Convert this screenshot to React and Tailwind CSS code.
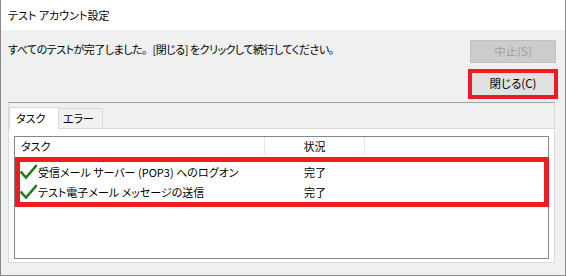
import React from 'react';

const font = { fontFamily: '"Noto Sans CJK JP", "Noto Sans", sans-serif', fontFeatureSettings: '"palt"' };

const Check = () => (
  <svg width="17" height="16" viewBox="0 0 17 16" className="shrink-0">
    <path d="M1.5 8.5 L6 13.5 L16 2" fill="none" stroke="#1d7d1d" strokeWidth="2.6" strokeLinecap="square" />
  </svg>
);

const rows = [
  { task: '受信メール サーバー (POP3) へのログオン', status: '完了' },
  { task: 'テスト電子メール メッセージの送信', status: '完了' },
];

export default function App() {
  return (
    <div className="w-[566px] h-[276px] bg-[#f0f0f0] border-x border-b border-[#8a8a8a] flex flex-col text-[11px] text-black leading-none overflow-hidden" style={font}>
      <div className="h-[30px] bg-white flex items-center pl-[7px] shrink-0">テスト アカウント設定</div>

      <div className="flex justify-between pl-[7px] pr-[7px] pt-[10px]">
        <div className="pt-[4px] tracking-[-0.5px]">
          すべてのテストが完了しました<span style={{ fontFeatureSettings: 'normal' }}>。</span>[閉じる] をクリックして続行してください<span style={{ fontFeatureSettings: 'normal' }}>。</span>
        </div>
        <div className="flex flex-col items-center w-[90px] text-[11.5px]">
          <div className="w-[86px] h-[23px] bg-[#cccccc] border border-[#bfbfbf] flex items-center justify-center text-[#a0a0a0]">中止(S)</div>
          <div className="mt-[6px] w-[90px] h-[30px] border-[4px] border-[#ed1c24] bg-[#e1e1e1] flex items-center justify-center">閉じる(C)</div>
        </div>
      </div>

      <div className="ml-[7px] mr-[10px] mt-[3px] h-[161px] border-t border-t-[#a0a0a0] border-x border-b border-[#d9d9d9] flex flex-col">
        <div className="flex items-end pt-[3px] h-[25px] shrink-0">
          <div className="w-[50px] h-[22px] bg-white border-x border-t border-[#d9d9d9] -mb-px relative z-10 pl-[6px] flex items-center">タスク</div>
          <div className="w-[44px] h-[20px] bg-[#f0f0f0] border-r border-t border-[#d9d9d9] pl-[4px] flex items-center">エラー</div>
        </div>
        <div className="flex-1 bg-white border-t border-[#d9d9d9] px-[5px] pt-[7px] pb-[3px]">
          <div className="h-full border border-[#828790] flex flex-col">
            <div className="grid grid-cols-[250px_100px_1fr] h-[18px] shrink-0">
              <div className="pl-[6px] flex items-center border-r border-[#e5e5e5]">タスク</div>
              <div className="flex items-center justify-center border-r border-[#e5e5e5]">状況</div>
              <div></div>
            </div>
            <div className="mt-[2px] border-[5px] border-[#ed1c24] -mr-px">
              {rows.map((r) => (
                <div key={r.task} className="grid grid-cols-[245px_100px_1fr] h-[20px]">
                  <div className="flex items-center gap-[1px]">
                    <Check />
                    <span>{r.task}</span>
                  </div>
                  <div className="flex items-center justify-center">{r.status}</div>
                  <div></div>
                </div>
              ))}
            </div>
          </div>
        </div>
      </div>
    </div>
  );
}
